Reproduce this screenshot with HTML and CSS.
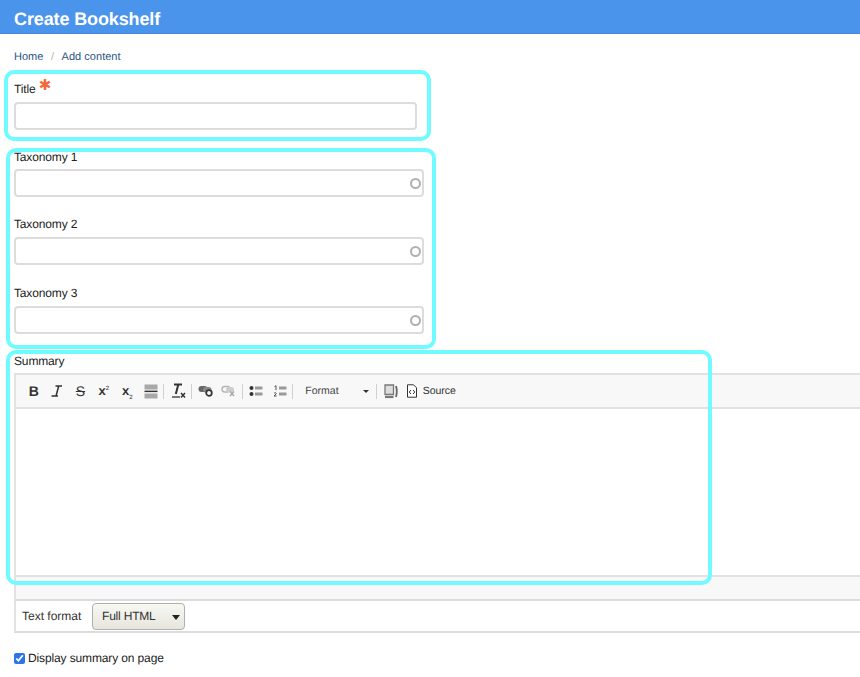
FILE: index.html
```html
<!DOCTYPE html>
<html lang="en">
<head>
<meta charset="utf-8">
<title>Create Bookshelf</title>
<link rel="stylesheet" href="styles.css">
</head>
<body>
<header class="page-head"><h1>Create Bookshelf</h1></header>
<main class="content">
  <nav class="crumbs"><a>Home</a><span class="sep">/</span><a>Add content</a></nav>
  <div class="field title-field">
    <label>Title <span class="req">✱</span></label>
    <input class="text title-input" type="text">
  </div>
  <div class="field tax1">
    <label>Taxonomy 1</label>
    <div class="auto"><input class="text" type="text"><span class="throb"></span></div>
  </div>
  <div class="field tax2">
    <label>Taxonomy 2</label>
    <div class="auto"><input class="text" type="text"><span class="throb"></span></div>
  </div>
  <div class="field tax3">
    <label>Taxonomy 3</label>
    <div class="auto"><input class="text" type="text"><span class="throb"></span></div>
  </div>
  <div class="field summary">
    <label>Summary</label>
    <div class="editor">
      <div class="toolbar">
        <span class="btn"><b class="g-b">B</b></span>
        <span class="btn"><svg width="12" height="12" viewBox="0 0 12 12"><path d="M4.500 1h6.500M3 11h-2.500M7.700 1 5 11M1 11h6" fill="none" stroke="#333" stroke-width="1.500"/></svg></span>
        <span class="btn"><s class="g-s">S</s></span>
        <span class="btn"><span class="g-x">x<sup>2</sup></span></span>
        <span class="btn"><span class="g-x">x<sub>2</sub></span></span>
        <span class="btn"><svg width="14" height="15" viewBox="0 0 14 15"><path d="M0.500 0.500h13v5h-13z" fill="#a8a8a8"/><path d="M0.500 6.600h13v1.500h-13z" fill="#333"/><path d="M0.500 9.500h13v5h-13z" fill="#a8a8a8"/></svg></span>
        <span class="div"></span>
        <span class="btn"><svg width="15" height="16" viewBox="0 0 15 16"><path d="M3 1.500h8M7.300 1.500 4.800 11" fill="none" stroke="#333" stroke-width="2"/><path d="M1 14h8" stroke="#333" stroke-width="1.300"/><path d="m10 10 4 4.500m0-4.500-4 4.500" stroke="#333" stroke-width="1.500"/></svg></span>
        <span class="div"></span>
        <span class="btn"><svg width="15" height="12" viewBox="0 0 15 12"><rect x="0.500" y="1" width="9" height="6" rx="3" fill="#666"/><rect x="5" y="2" width="8.500" height="5.500" rx="2.700" fill="#888"/><circle cx="11" cy="8" r="2.800" fill="#f8f8f8" stroke="#333" stroke-width="1.700"/></svg></span>
        <span class="btn off"><svg width="15" height="12" viewBox="0 0 15 12"><rect x="1" y="1.500" width="8" height="5.500" rx="2.700" fill="none" stroke="#999" stroke-width="1.500"/><rect x="5" y="2" width="8" height="5" rx="2.500" fill="#bbb"/><path d="m9 6.500 4 4.500m0-4.500-4 4.500" stroke="#888" stroke-width="1.500"/></svg></span>
        <span class="div"></span>
        <span class="btn"><svg width="14" height="12" viewBox="0 0 14 12"><circle cx="2.500" cy="3" r="2" fill="#333"/><circle cx="2.500" cy="9" r="2" fill="#333"/><path d="M6 1.500h7.500v3H6zM6 7.500h7.500v3H6z" fill="#999"/></svg></span>
        <span class="btn"><svg width="14" height="12" viewBox="0 0 14 12"><path d="M1.500 1.500 3 .7v4.500M1 8.300c1-1 2.600-.6 2.200.6L1 11h2.600" fill="none" stroke="#444" stroke-width=".9"/><path d="M6 1.500h7.500v3H6zM6 7.500h7.500v3H6z" fill="#999"/></svg></span>
        <span class="div"></span>
        <span class="combo"><span>Format</span><span class="caret"></span></span>
        <span class="div"></span>
        <span class="btn"><svg width="14" height="15" viewBox="0 0 14 15"><path d="M1 1h8.500v9.500H1z" fill="#ddd" stroke="#777" stroke-width="1.300"/><path d="M1 13h8.500" stroke="#777" stroke-width="2.200"/><path d="M12 2c1 3.500 1 7.500 0 11" fill="none" stroke="#666" stroke-width="1.800"/></svg></span>
        <span class="btn source"><svg width="12" height="14" viewBox="0 0 12 14"><path d="M1.500.8h6l3 3v9.400h-9z" fill="#fff" stroke="#333"/><path d="M5 6 3.200 8 5 10M7 6l1.800 2L7 10" fill="none" stroke="#333"/></svg><span>Source</span></span>
      </div>
      <div class="area"></div>
      <div class="status"></div>
    </div>
    <div class="format">
      <span class="format-label">Text format</span>
      <span class="select">Full HTML<span class="sel-caret"></span></span>
    </div>
  </div>
  <label class="check"><input type="checkbox" checked>Display summary on page</label>
</main>
<div class="mark mark-title"></div>
<div class="mark mark-tax"></div>
<div class="mark mark-sum"></div>
</body>
</html>
```
FILE: styles.css
```css
* { box-sizing: border-box; }
html, body { margin: 0; height: 677px; overflow: hidden; background: #fff; }
body { position: relative; font-family: "Liberation Sans", Arial, sans-serif; font-size: 12px; color: #222; text-rendering: geometricPrecision; }
.page-head { height: 34px; background: #4a94eb; border-bottom: 1px solid #4389df; padding-left: 14px; }
.page-head h1 { margin: 0; font-size: 18px; line-height: 38px; color: #fff; font-weight: 700; letter-spacing: -0.12px; }
.content { padding: 0 0 0 14px; }
.crumbs { height: 16px; margin-top: 16px; font-size: 11px; line-height: 15px; color: #2a5484; letter-spacing: 0.03px; }
.sep { color: #b5b5b5; margin: 0 7.500px; }
.field label { display: block; font-size: 12px; line-height: 16px; color: #222; letter-spacing: -0.15px; }
.title-field { margin-top: 15px; }
.req { color: #f4683a; font-size: 15px; line-height: 10px; position: relative; top: -3px; left: 0; font-family: "DejaVu Sans", sans-serif; }
.text { display: block; height: 28px; border: 2px solid #dcdcdc; border-radius: 4px; background: #fff; outline: 0; padding: 0; }
.title-input { width: 403px; margin-top: 5px; }
.auto { position: relative; width: 410px; margin-top: 4px; }
.auto .text { width: 100%; }
.throb { position: absolute; right: 3px; top: 9px; width: 11px; height: 11px; border: 2px solid #b0b0b0; border-radius: 50%; }
.tax1 { margin-top: 19px; }
.tax2 { margin-top: 19px; }
.tax2 .auto, .tax3 .auto { margin-top: 5px; }
.tax3 { margin-top: 20px; }
.summary { margin-top: 19px; }
.editor { margin-top: 4px; border-top: 2px solid #e2e2e2; }
.toolbar { height: 34px; background: #f8f8f8; border-left: 2px solid #e2e2e2; border-bottom: 2px solid #e2e2e2; display: flex; align-items: center; padding-left: 6px; }
.btn { width: 23.400px; height: 20px; display: flex; align-items: center; justify-content: center; flex: none; color: #333; font-size: 12px; }
.off { opacity: .7; }
.g-b { font-size: 14px; font-weight: 700; }
.g-s { font-size: 14px; font-weight: 400; }
.g-x { font-weight: 700; font-size: 13px; line-height: 12px; }
.g-x sup, .g-x sub { font-size: 6px; font-weight: 400; line-height: 0; }
.div { width: 1px; height: 15px; background: #d0d0d0; margin: 0 2px 0 1px; flex: none; }
.combo { width: 80px; display: flex; align-items: center; justify-content: space-between; padding: 0 6px 0 10px; font-size: 10.500px; color: #444; flex: none; }
.caret { width: 0; height: 0; border: 3px solid transparent; border-top-color: #333; border-bottom: 0; }
.source { width: auto; margin-left: 3px; gap: 5px; font-size: 10.500px; color: #333; }
.area { height: 168px; background: #fff; border-left: 2px solid #e2e2e2; border-bottom: 2px solid #e2e2e2; }
.status { height: 24px; background: #f8f8f8; border-left: 2px solid #e2e2e2; border-bottom: 2px solid #dcdcdc; }
.format { height: 32px; border-left: 2px solid #e2e2e2; border-bottom: 2px solid #dcdcdc; display: flex; align-items: center; padding-left: 6px; font-size: 12px; color: #333; }
.format-label { width: 70px; }
.select { position: relative; width: 93px; height: 27px; border: 1px solid #b0b0a8; border-radius: 4px; background: linear-gradient(#f8f8f3, #e6e6de); line-height: 25px; padding-left: 9px; font-size: 12px; color: #333; letter-spacing: -0.2px; }
.sel-caret { position: absolute; right: 4px; top: 11px; width: 0; height: 0; border: 4px solid transparent; border-top: 5px solid #222; border-bottom: 0; }
.check { display: flex; align-items: center; margin-top: 18px; font-size: 12px; line-height: 14px; color: #222; letter-spacing: -0.13px; }
.check input { margin: 0 3px 0 0; width: 11px; height: 11px; accent-color: #2a76e8; }
.mark { position: absolute; border: 4px solid #6ffbff; border-radius: 10px; pointer-events: none; }
.mark-title { left: 4px; top: 70px; width: 427px; height: 71px; }
.mark-tax { left: 6px; top: 148px; width: 430px; height: 201px; }
.mark-sum { left: 6px; top: 350px; width: 706px; height: 235px; }
```
